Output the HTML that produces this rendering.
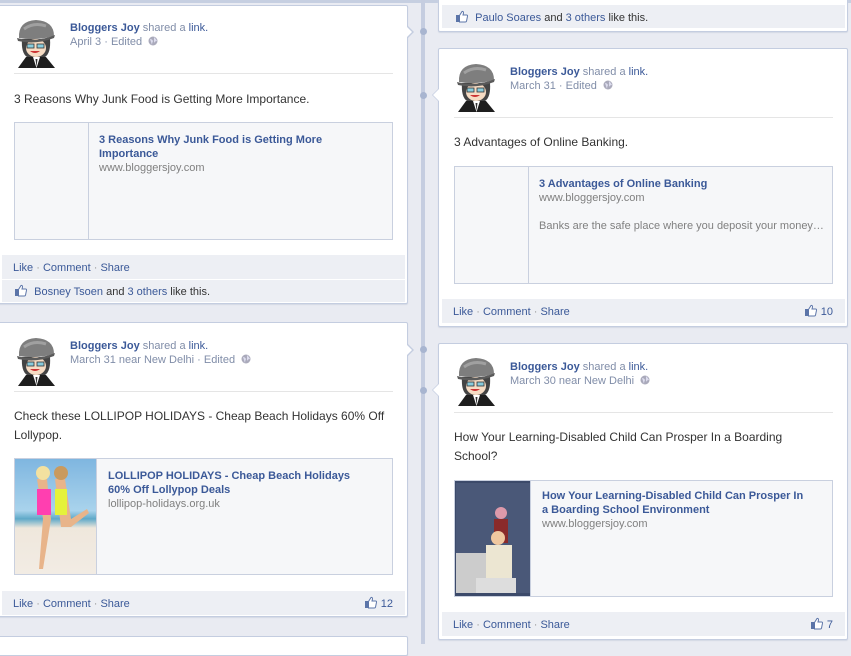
<!DOCTYPE html>
<html><head><meta charset="utf-8"><style>
*{margin:0;padding:0;box-sizing:border-box}
body{width:851px;height:644px;overflow:hidden;background:#e9ebf2;font-family:"Liberation Sans",Tahoma,sans-serif;font-size:11px;color:#333;position:relative}
.abs{position:absolute}
.card{position:absolute;background:#fff;border:1px solid #c4cde0;border-radius:2px;box-shadow:0 1px 1px #d3d8e4}
.tl{position:absolute;left:421px;top:0;width:4px;height:644px;background:#c5cde0}
.dot{position:absolute;width:7px;height:7px;border-radius:50%;background:#a8b5d0;left:420px}
.arr{position:absolute;width:0;height:0}
a,.lk{color:#3b5998;text-decoration:none}
.name{font-weight:bold;color:#3b5998}
.gray{color:#808da8}
.sep{position:absolute;height:1px;background:#e5e5e5}
.txt{position:absolute;font-size:12px;color:#333;line-height:19px}
.box{position:absolute;background:#f6f7f9;border:1px solid #c9d0df}
.box .th{position:absolute;left:0;top:0;bottom:0;border-right:1px solid #c9d0df}
.box .t{position:absolute;font-weight:bold;color:#3b5998;font-size:11px;line-height:14px}
.box .u{position:absolute;color:#808080;font-size:11px}
.bar{position:absolute;background:#edeff4;font-size:11px;color:#3b5998;line-height:27px;padding-left:8px}
.bar .d{color:#999}
.cnt{position:absolute;right:8px;top:0;color:#3b5998}
</style></head><body>
<div class="abs" style="left:0;top:0;width:851px;height:3px;background:#c6cfe1"></div>
<div class="tl"></div>
<div class="dot" style="top:92px"></div>
<div class="dot" style="top:28px"></div>
<div class="dot" style="top:346px"></div>
<div class="dot" style="top:387px"></div>

<svg width="0" height="0" style="position:absolute"><defs>
<g id="av">
<path d="M4 49 L12 38 L32 38 L41 49Z" fill="#1e1e1e"/>
<path d="M19 38 L22.5 49 L26 38Z" fill="#fff"/>
<path d="M21.5 40 L22.5 48 L23.5 40Z" fill="#333"/>
<path d="M8 20 Q7 34 13 38 L31 38 Q37 34 36 20Z" fill="#444"/>
<ellipse cx="22" cy="29" rx="10" ry="9" fill="#f6dcc4"/>
<rect x="13" y="25" width="7" height="4" fill="#8cd" stroke="#333" stroke-width=".8"/>
<rect x="23" y="25" width="7" height="4" fill="#8cd" stroke="#333" stroke-width=".8"/>
<path d="M16 32 Q21 36 26 32" fill="#c33"/>
<path d="M5 19 Q4 2 22 1 Q40 2 40 17 Q22 22 5 19Z" fill="#7e7e7e"/>
<path d="M3 19 Q22 24 41 16 L40 19 Q22 26 4 22Z" fill="#5a5a5a"/>
<path d="M10 10 Q20 3 32 7" stroke="#a0a0a0" stroke-width="3" fill="none"/>
</g>
<g id="th"><path d="M1 5 h3 v7 h-3z" fill="#5b74a8"/><path d="M4.5 5.5 L7 1.5 Q8.5 1 8.5 3 L8 5 h3.5 q1.2 0 1 1.2 l-1 5 q-.3 .8 -1.2 .8 H4.5z" fill="#fff" stroke="#5b74a8" stroke-width="1"/></g>
<g id="gl"><circle cx="5" cy="5" r="4.5" fill="#aab"/><path d="M2 3 q2 0 3 2 q-1 2 -1 4 M6 1 q2 2 3 4 q-2 0 -3 2" fill="#dde" /></g>
</defs></svg>

<!-- Left card 1 -->
<div class="card" style="left:-2px;top:5px;width:410px;height:299px"></div>
<div class="arr" style="left:407px;top:25px;border-left:7px solid #c4cde0;border-top:7px solid transparent;border-bottom:7px solid transparent"></div>
<div class="arr" style="left:406px;top:26px;border-left:6px solid #fff;border-top:6px solid transparent;border-bottom:6px solid transparent"></div>
<svg class="abs" style="left:14px;top:19px" width="44" height="49"><use href="#av"/></svg>
<div class="abs" style="left:70px;top:22px"><span class="name">Bloggers Joy</span> <span class="gray">shared a</span> <a>link.</a></div>
<div class="abs gray" style="left:70px;top:36px">April 3 · Edited &nbsp;<svg width="10" height="10" style="vertical-align:-1px"><use href="#gl"/></svg></div>
<div class="sep" style="left:14px;top:73px;width:379px"></div>
<div class="txt" style="left:14px;top:90px">3 Reasons Why Junk Food is Getting More Importance.</div>
<div class="box" style="left:14px;top:122px;width:379px;height:118px"><div class="th" style="width:74px"></div>
<div class="t" style="left:84px;top:10px">3 Reasons Why Junk Food is Getting More<br>Importance</div>
<div class="u" style="left:84px;top:39px">www.bloggersjoy.com</div></div>
<div class="bar" style="left:2px;top:255px;width:403px;height:24px;padding-left:11px">Like <span class="d">·</span> Comment <span class="d">·</span> Share</div>
<div class="bar" style="left:2px;top:280px;width:403px;height:22px;line-height:24px;padding-left:12px"><svg width="14" height="13" style="vertical-align:-2px"><use href="#th"/></svg>&nbsp; Bosney Tsoen <span style="color:#333">and</span> 3 others <span style="color:#333">like this.</span></div>

<!-- Left card 2 -->
<div class="card" style="left:-2px;top:322px;width:410px;height:295px"></div>
<div class="arr" style="left:407px;top:343px;border-left:7px solid #c4cde0;border-top:7px solid transparent;border-bottom:7px solid transparent"></div>
<div class="arr" style="left:406px;top:344px;border-left:6px solid #fff;border-top:6px solid transparent;border-bottom:6px solid transparent"></div>
<svg class="abs" style="left:14px;top:337px" width="44" height="49"><use href="#av"/></svg>
<div class="abs" style="left:70px;top:340px"><span class="name">Bloggers Joy</span> <span class="gray">shared a</span> <a>link.</a></div>
<div class="abs gray" style="left:70px;top:354px">March 31 near New Delhi · Edited &nbsp;<svg width="10" height="10" style="vertical-align:-1px"><use href="#gl"/></svg></div>
<div class="sep" style="left:14px;top:391px;width:379px"></div>
<div class="txt" style="left:14px;top:407px">Check these LOLLIPOP HOLIDAYS - Cheap Beach Holidays 60% Off<br>Lollypop.</div>
<div class="box" style="left:14px;top:458px;width:379px;height:117px">
<div class="th" style="width:82px;background:linear-gradient(#7fb6e0 0%,#a9d3ec 45%,#5fa9c8 52%,#efe7dc 60%,#f2ece4 100%)">
<svg width="80" height="112" class="abs" style="left:0;top:0"><path d="M22 20 l10 0 l4 40 l-8 50 l-4 0 l4-50z" fill="#e8b48a"/><path d="M40 20 l10 0 l6 40 l16 -10 l2 4 l-18 14 l-10 0z" fill="#e8b48a"/><rect x="22" y="30" width="14" height="26" fill="#ff3fb0"/><rect x="40" y="30" width="12" height="26" fill="#e5f23a"/><circle cx="28" cy="14" r="7" fill="#f3e1a0"/><circle cx="46" cy="14" r="7" fill="#c99a5e"/></svg></div>
<div class="t" style="left:93px;top:10px">LOLLIPOP HOLIDAYS - Cheap Beach Holidays<br>60% Off Lollypop Deals</div>
<div class="u" style="left:93px;top:39px">lollipop-holidays.org.uk</div></div>
<div class="bar" style="left:2px;top:591px;width:403px;height:24px;padding-left:11px">Like <span class="d">·</span> Comment <span class="d">·</span> Share<span class="cnt" style="right:12px"><svg width="14" height="13" style="vertical-align:-2px"><use href="#th"/></svg> 12</span></div>

<!-- Left card 3 -->
<div class="card" style="left:-2px;top:636px;width:410px;height:20px"></div>

<!-- Right card 1 (tail) -->
<div class="card" style="left:438px;top:-5px;width:410px;height:37px"></div>
<div class="bar" style="left:442px;top:5px;width:403px;height:23px;line-height:26px;padding-left:13px"><svg width="14" height="13" style="vertical-align:-2px"><use href="#th"/></svg>&nbsp; Paulo Soares <span style="color:#333">and</span> 3 others <span style="color:#333">like this.</span></div>

<!-- Right card 2 -->
<div class="card" style="left:438px;top:48px;width:410px;height:279px"></div>
<div class="arr" style="left:432px;top:88px;border-right:7px solid #c4cde0;border-top:7px solid transparent;border-bottom:7px solid transparent"></div>
<div class="arr" style="left:433px;top:89px;border-right:6px solid #fff;border-top:6px solid transparent;border-bottom:6px solid transparent"></div>
<svg class="abs" style="left:454px;top:63px" width="44" height="49"><use href="#av"/></svg>
<div class="abs" style="left:510px;top:66px"><span class="name">Bloggers Joy</span> <span class="gray">shared a</span> <a>link.</a></div>
<div class="abs gray" style="left:510px;top:80px">March 31 · Edited &nbsp;<svg width="10" height="10" style="vertical-align:-1px"><use href="#gl"/></svg></div>
<div class="sep" style="left:454px;top:117px;width:379px"></div>
<div class="txt" style="left:454px;top:133px">3 Advantages of Online Banking.</div>
<div class="box" style="left:454px;top:166px;width:379px;height:118px"><div class="th" style="width:74px"></div>
<div class="t" style="left:84px;top:10px">3 Advantages of Online Banking</div>
<div class="u" style="left:84px;top:25px">www.bloggersjoy.com</div>
<div class="u" style="left:84px;top:53px">Banks are the safe place where you deposit your money…</div></div>
<div class="bar" style="left:442px;top:299px;width:403px;height:24px;padding-left:11px">Like <span class="d">·</span> Comment <span class="d">·</span> Share<span class="cnt" style="right:12px"><svg width="14" height="13" style="vertical-align:-2px"><use href="#th"/></svg> 10</span></div>

<!-- Right card 3 -->
<div class="card" style="left:438px;top:343px;width:410px;height:297px"></div>
<div class="arr" style="left:432px;top:383px;border-right:7px solid #c4cde0;border-top:7px solid transparent;border-bottom:7px solid transparent"></div>
<div class="arr" style="left:433px;top:384px;border-right:6px solid #fff;border-top:6px solid transparent;border-bottom:6px solid transparent"></div>
<svg class="abs" style="left:454px;top:357px" width="44" height="49"><use href="#av"/></svg>
<div class="abs" style="left:510px;top:361px"><span class="name">Bloggers Joy</span> <span class="gray">shared a</span> <a>link.</a></div>
<div class="abs gray" style="left:510px;top:375px">March 30 near New Delhi &nbsp;<svg width="10" height="10" style="vertical-align:-1px"><use href="#gl"/></svg></div>
<div class="sep" style="left:454px;top:412px;width:379px"></div>
<div class="txt" style="left:454px;top:428px">How Your Learning-Disabled Child Can Prosper In a Boarding<br>School?</div>
<div class="box" style="left:454px;top:480px;width:379px;height:117px">
<div class="th" style="width:76px;background:#3c4a6a">
<svg width="75" height="112" class="abs" style="left:1px;top:2px"><rect x="0" y="0" width="74" height="110" fill="#4a5878"/><rect x="0" y="70" width="30" height="40" fill="#ccc"/><circle cx="45" cy="30" r="6" fill="#d9a"/><rect x="38" y="36" width="14" height="24" fill="#8a2a2a"/><circle cx="42" cy="55" r="7" fill="#f0c8a0"/><rect x="30" y="62" width="26" height="40" fill="#ece6d2"/><rect x="20" y="95" width="40" height="15" fill="#ddd"/></svg></div>
<div class="t" style="left:87px;top:8px">How Your Learning-Disabled Child Can Prosper In<br>a Boarding School Environment</div>
<div class="u" style="left:87px;top:37px">www.bloggersjoy.com</div></div>
<div class="bar" style="left:442px;top:612px;width:403px;height:24px;padding-left:11px">Like <span class="d">·</span> Comment <span class="d">·</span> Share<span class="cnt" style="right:12px"><svg width="14" height="13" style="vertical-align:-2px"><use href="#th"/></svg> 7</span></div>
</body></html>
